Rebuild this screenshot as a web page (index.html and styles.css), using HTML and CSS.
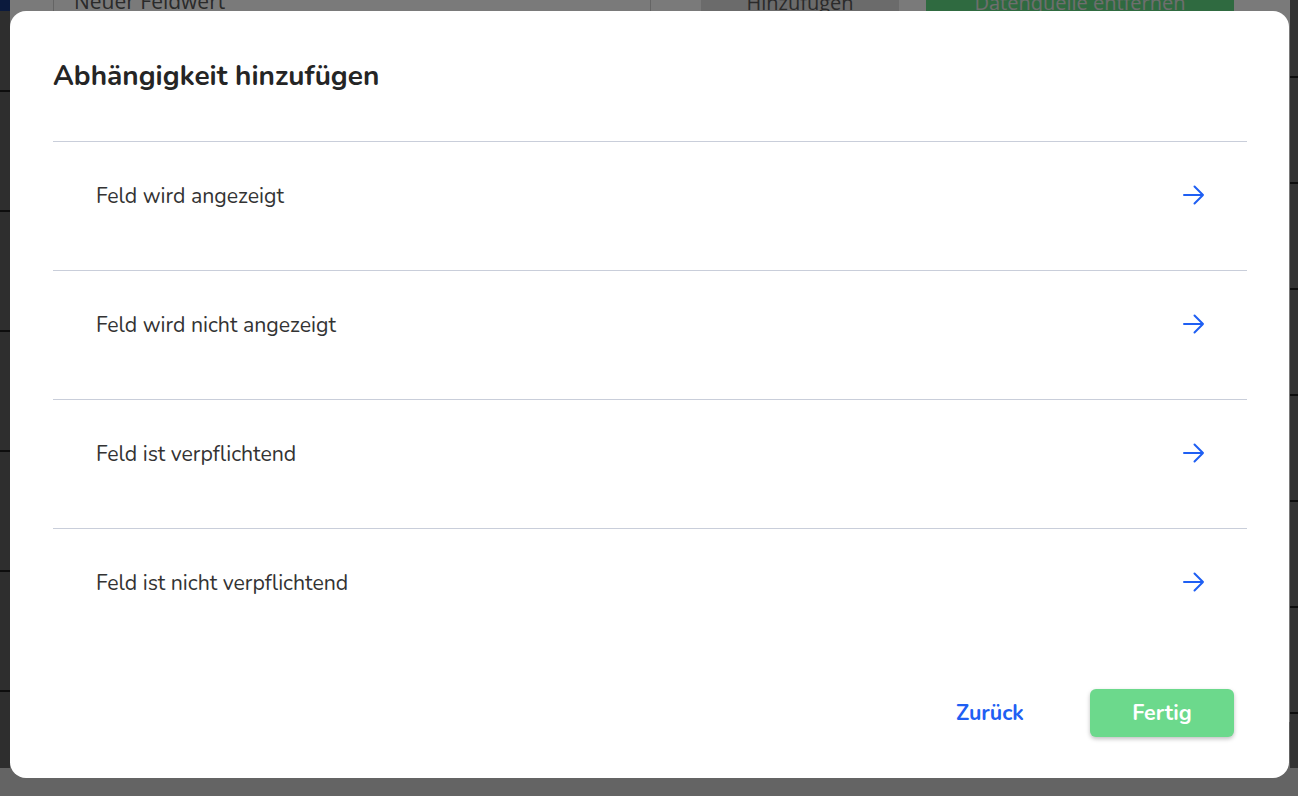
FILE: index.html
```html
<!DOCTYPE html>
<html lang="de">
<head>
<meta charset="utf-8">
<title>Abhängigkeit hinzufügen</title>
<link rel="stylesheet" href="styles.css">
</head>
<body>
<div class="app">
  <div class="app-side"></div>
  <div class="app-main">
    <div class="app-toolbar">
      <div class="app-input">Neuer Feldwert</div>
      <div class="app-btn app-btn-gray">Hinzufügen</div>
      <div class="app-btn app-btn-green">Datenquelle entfernen</div>
    </div>
    <div class="app-rows">
      <div class="app-row"></div>
      <div class="app-row"></div>
      <div class="app-row"></div>
      <div class="app-row"></div>
      <div class="app-row"></div>
      <div class="app-row"></div>
    </div>
    <div class="app-bottom">
      <span class="app-check"></span>
    </div>
  </div>
  <div class="app-side app-side-right"></div>
</div>

<div class="overlay">
  <div class="modal" role="dialog" aria-labelledby="dlg-title">
    <h2 class="modal-title" id="dlg-title">Abhängigkeit hinzufügen</h2>
    <ul class="option-list">
      <li class="option">
        <span class="option-label">Feld wird angezeigt</span>
        <svg class="option-arrow" viewBox="0 0 24 24" width="24" height="24"><path d="M2 12h19M12.5 3.5L21 12l-8.5 8.5"/></svg>
      </li>
      <li class="option">
        <span class="option-label">Feld wird nicht angezeigt</span>
        <svg class="option-arrow" viewBox="0 0 24 24" width="24" height="24"><path d="M2 12h19M12.5 3.5L21 12l-8.5 8.5"/></svg>
      </li>
      <li class="option">
        <span class="option-label">Feld ist verpflichtend</span>
        <svg class="option-arrow" viewBox="0 0 24 24" width="24" height="24"><path d="M2 12h19M12.5 3.5L21 12l-8.5 8.5"/></svg>
      </li>
      <li class="option">
        <span class="option-label">Feld ist nicht verpflichtend</span>
        <svg class="option-arrow" viewBox="0 0 24 24" width="24" height="24"><path d="M2 12h19M12.5 3.5L21 12l-8.5 8.5"/></svg>
      </li>
    </ul>
    <div class="modal-footer">
      <button class="btn btn-link" type="button">Zurück</button>
      <button class="btn btn-primary" type="button">Fertig</button>
    </div>
  </div>
</div>
</body>
</html>
```

FILE: styles.css
```css
* { box-sizing: border-box; }

html, body {
  margin: 0;
  padding: 0;
  height: 100%;
  overflow: hidden;
}

body {
  font-family: Nunito, Lato, "Open Sans", "Liberation Sans", sans-serif;
  background: #c8c8c8;
}

/* ---------- background application (dimmed) ---------- */
.app {
  display: flex;
  height: 100%;
  margin-top: -28px;
}

.app-side {
  width: 10px;
  flex: none;
  background:
    linear-gradient(#17357a 0 39px, transparent 39px),
    repeating-linear-gradient(#5c5c5c 0 118px, #1a1a1a 118px 120px);
}

.app-side-right {
  width: 8px;
  background: repeating-linear-gradient(#666 0 104px, #1a1a1a 104px 106px);
}

.app-main {
  flex: 1;
  display: flex;
  flex-direction: column;
  background: #f4f4f4;
}

.app-toolbar {
  display: flex;
  align-items: stretch;
  height: 48px;
  padding-left: 43px;
}

.app-input {
  width: 598px;
  border-left: 1px solid #c8c8c8;
  border-right: 1px solid #c8c8c8;
  padding: 16px 20px 0;
  font-size: 21px;
  line-height: 26px;
  color: #555;
  font-family: "Open Sans", sans-serif;
}

.app-btn {
  display: flex;
  align-items: center;
  justify-content: center;
  font-family: "Open Sans", sans-serif;
  font-size: 20px;
  padding-top: 12px;
}

.app-btn-gray {
  width: 198px;
  margin-left: 50px;
  background: #d6d6d6;
  color: #555;
}

.app-btn-green {
  width: 308px;
  margin-left: 27px;
  background: #5fd580;
  color: #ddd;
}

.app-rows {
  flex: 1;
  display: flex;
  flex-direction: column;
}

.app-row {
  flex: 1;
}

.app-bottom {
  height: 46px;
  background: linear-gradient(#b8b8b8, #cecece);
  padding-left: 44px;
}

.app-check {
  display: inline-block;
  width: 23px;
  height: 20px;
  border-radius: 3px;
  background: #2449a8;
}

/* ---------- modal ---------- */
.overlay {
  position: fixed;
  inset: 0;
  background: rgba(0, 0, 0, 0.5);
  padding: 11px 9px 18px 10px;
  display: flex;
}

.modal {
  flex: 1;
  background: #fff;
  border-radius: 16px;
  padding: 49px 42px 41px 43px;
  display: flex;
  flex-direction: column;
}

.modal-title {
  margin: 0;
  font-size: 28px;
  line-height: 32px;
  font-weight: 700;
  color: #252525;
}

.option-list {
  list-style: none;
  margin: 49px 0 0;
  padding: 0;
}

.option {
  display: flex;
  align-items: flex-start;
  justify-content: space-between;
  height: 129px;
  border-top: 1px solid #c9ceda;
  padding: 41px 41px 0 43px;
}

.option-label {
  font-size: 21.3px;
  line-height: 26px;
  color: #333;
}

.option-arrow {
  margin-top: 0;
  fill: none;
  stroke: #1f5ff3;
  stroke-width: 2;
  stroke-linecap: round;
  stroke-linejoin: round;
}

.modal-footer {
  margin-top: auto;
  display: flex;
  justify-content: flex-end;
  gap: 28px;
  padding-right: 13px;
}

.btn {
  width: 144px;
  height: 48px;
  border: none;
  border-radius: 6px;
  font-family: inherit;
  font-size: 21.5px;
  font-weight: 700;
  cursor: pointer;
}

.btn-link {
  background: transparent;
  color: #1f5ff3;
}

.btn-primary {
  background: #6cd98c;
  color: #fff;
  box-shadow: 0 2px 4px rgba(0, 0, 0, 0.25);
}
```
